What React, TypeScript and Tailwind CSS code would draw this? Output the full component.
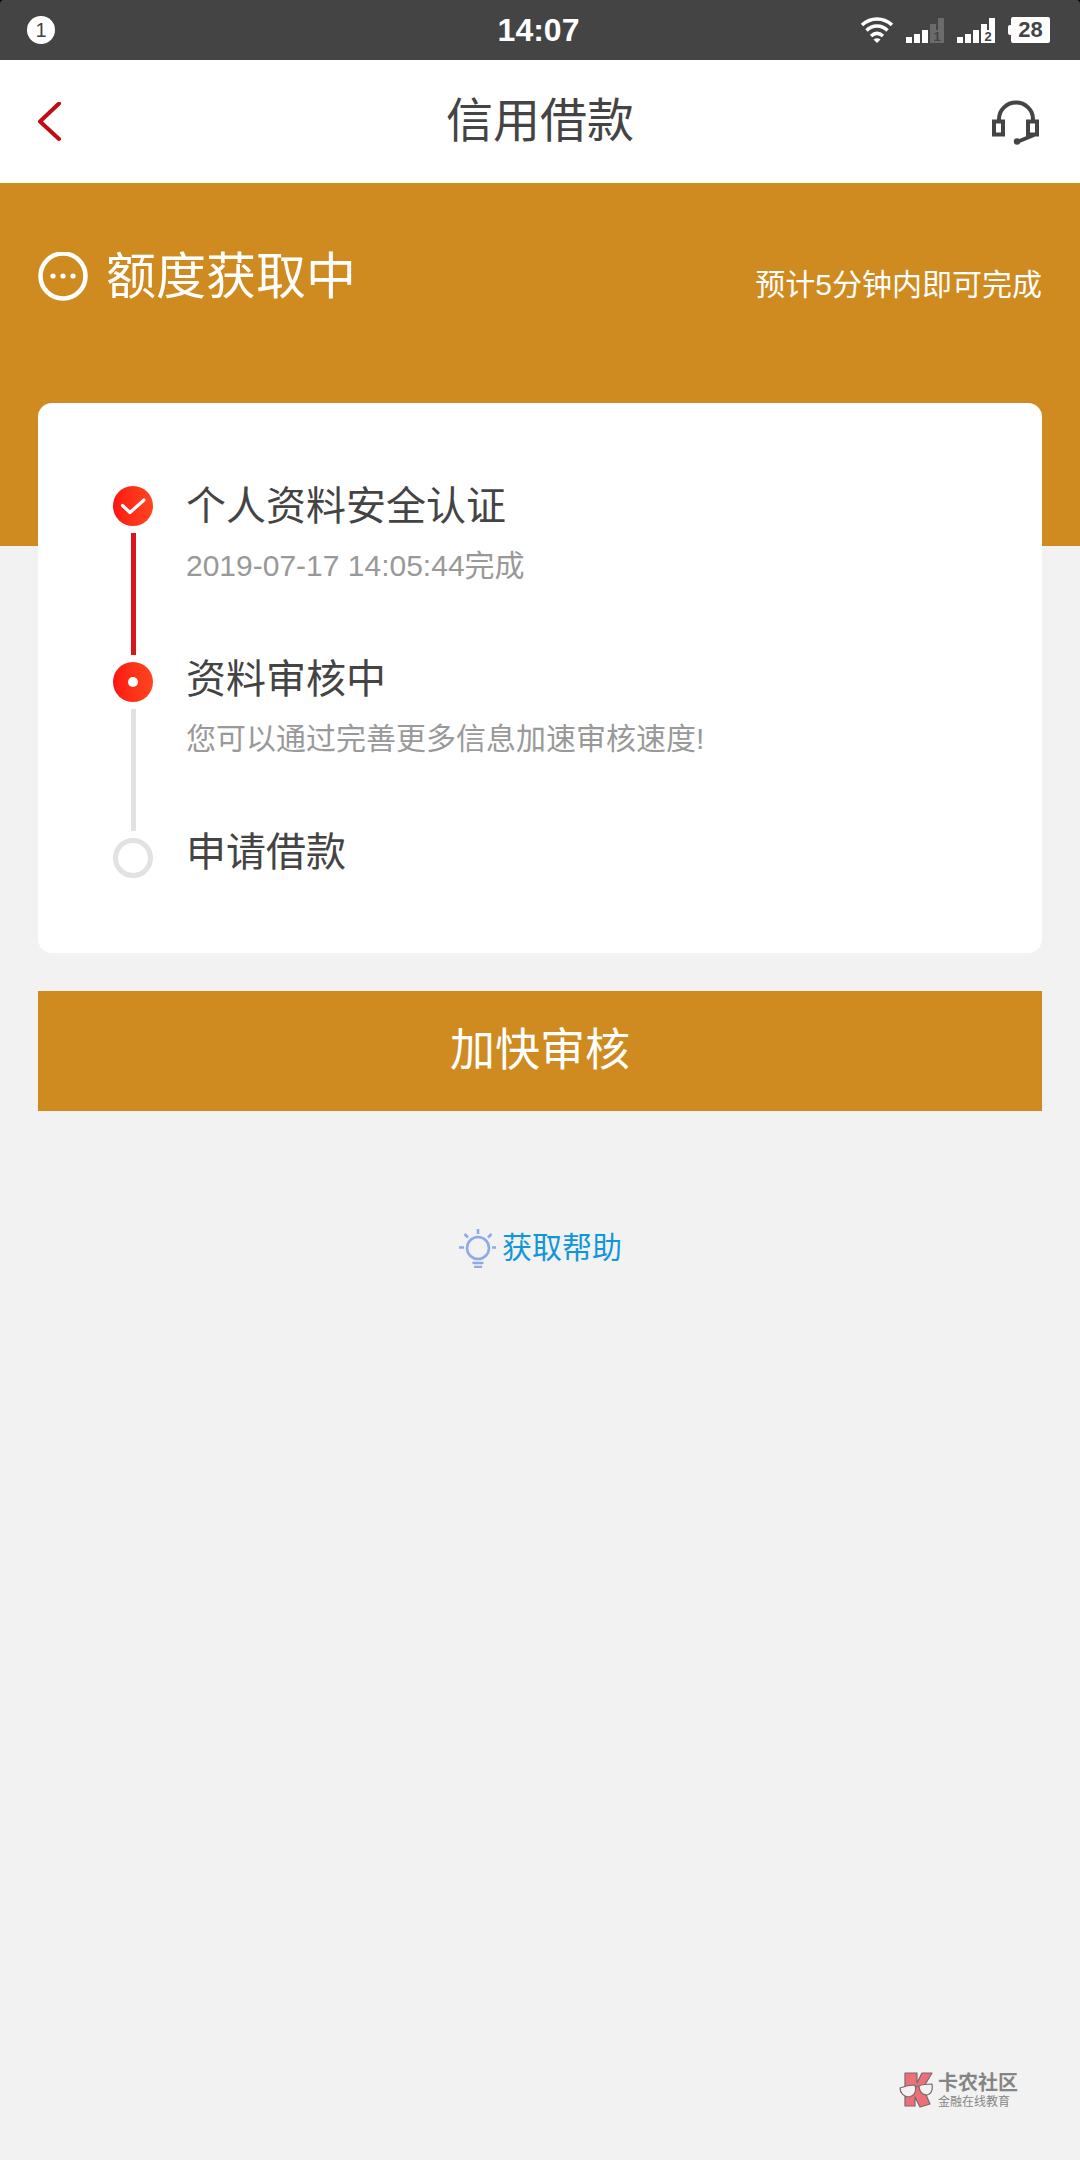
import { clsx } from "clsx";

type StepState = "done" | "current" | "todo";

const STEPS: { title: string; note?: string; state: StepState }[] = [
  { title: "个人资料安全认证", note: "2019-07-17 14:05:44完成", state: "done" },
  { title: "资料审核中", note: "您可以通过完善更多信息加速审核速度!", state: "current" },
  { title: "申请借款", state: "todo" },
];

export default function App() {
  return (
    <div className="flex min-h-screen flex-col bg-[#f2f2f2] font-['Liberation_Sans','Noto_Sans_CJK_SC',sans-serif] text-[#444444]">
      <StatusBar />
      <Header />
      <main>
        <Hero />
        <div className="-mt-[143px] px-[38px]">
          <StepCard />
          <button className="mt-[38px] block h-[120px] w-full bg-[#cf8b20] text-[45px] text-white">
            加快审核
          </button>
        </div>
        <div className="mt-[117px] flex justify-center">
          <a href="#help" className="flex items-center gap-[6px] text-[30px] leading-[40px] text-[#1296db]">
            <BulbIcon />
            获取帮助
          </a>
        </div>
      </main>
      <Footer />
    </div>
  );
}

function StatusBar() {
  return (
    <div className="bg-black">
      <div className="grid h-[60px] grid-cols-[1fr_auto_1fr] items-center rounded-t bg-[#444444] pr-[30px] pl-[27px] text-white">
        <span className="flex size-7 items-center justify-center rounded-full bg-white text-[20px] leading-none text-[#444444]">
          1
        </span>
        <span className="text-[32px] font-bold">14:07</span>
        <div className="flex items-center justify-end gap-[13px]">
          <WifiIcon />
          <SignalIcon sim="1" weak />
          <SignalIcon sim="2" />
          <div className="flex items-center">
            <span className="h-[10px] w-[3px] rounded-l-xs bg-white" />
            <span className="flex h-[26px] w-[39px] items-center justify-center rounded-xs bg-white text-[22px] leading-none font-bold text-[#444444]">
              28
            </span>
          </div>
        </div>
      </div>
    </div>
  );
}

function Header() {
  return (
    <header className="grid h-[123px] grid-cols-[1fr_auto_1fr] items-center bg-white px-[38px]">
      <button aria-label="返回" className="justify-self-start">
        <svg width="24" height="40" viewBox="0 0 24 40" fill="none" stroke="#c00d14" strokeWidth="4">
          <path d="M21 1.500 2 19.500 21 37" strokeLinecap="round" strokeLinejoin="round" />
        </svg>
      </button>
      <h1 className="text-[47px]">信用借款</h1>
      <button aria-label="客服" className="justify-self-end">
        <svg width="50" height="46" viewBox="0 0 50 46" fill="none" stroke="#444444" strokeWidth="4">
          <path d="M7 21v-1a17 16.500 0 0 1 34 0v1" />
          <path d="M2 22.500h9v13H2zM36 22.500h9v13h-9z" />
          <path d="M42 36 25 43" />
          <circle cx="25" cy="42.500" r="3.200" fill="#444444" stroke="none" />
        </svg>
      </button>
    </header>
  );
}

function Hero() {
  return (
    <section className="flex items-start justify-between bg-[#cf8b20] px-[38px] pt-16 pb-[239px] text-white">
      <h2 className="flex items-center gap-[18px] text-[50px] leading-[60px]">
        <svg width="50" height="50" viewBox="0 0 50 50" fill="white">
          <circle cx="25" cy="24" r="22.500" fill="none" stroke="white" strokeWidth="4.500" />
          <circle cx="15" cy="24" r="2.600" />
          <circle cx="25" cy="24" r="2.600" />
          <circle cx="35" cy="24" r="2.600" />
        </svg>
        额度获取中
      </h2>
      <p className="pt-[18px] text-[30px] leading-[40px]">预计5分钟内即可完成</p>
    </section>
  );
}

function StepCard() {
  return (
    <section className="flex gap-[33px] rounded-[14px] bg-white px-[75px] pt-[73px] pb-[71px]">
      <div className="flex flex-col items-center pt-[10px]">
        {STEPS.map((step, i) => (
          <div key={step.title} className="flex flex-col items-center">
            <StepIcon state={step.state} />
            {i < STEPS.length - 1 && (
              <span
                className={clsx(
                  "my-[7px] h-[122px] w-[5px]",
                  step.state === "done" ? "bg-[#d7151b]" : "bg-[#e2e2e2]"
                )}
              />
            )}
          </div>
        ))}
      </div>
      <ol className="flex flex-col gap-[53px]">
        {STEPS.map((step) => (
          <li key={step.title}>
            <h3 className="text-[40px] leading-[60px]">{step.title}</h3>
            {step.note && <p className="text-[30px] leading-[60px] text-[#999999]">{step.note}</p>}
          </li>
        ))}
      </ol>
    </section>
  );
}

function StepIcon({ state }: { state: StepState }) {
  if (state === "todo") {
    return <span className="size-10 rounded-full border-[5px] border-[#e2e2e2]" />;
  }
  return (
    <span className="flex size-10 items-center justify-center rounded-full bg-linear-to-r from-[#fb1212] to-[#ff4420]">
      {state === "done" ? (
        <svg width="28" height="20" viewBox="0 0 28 20" fill="none" stroke="white" strokeWidth="3.200">
          <path d="M3.500 9.500 11 16.500 25 4" strokeLinecap="round" strokeLinejoin="round" />
        </svg>
      ) : (
        <span className="size-[10px] rounded-full bg-white" />
      )}
    </span>
  );
}

function Footer() {
  return (
    <footer className="mt-auto flex justify-end gap-1 pr-[62px] pb-[50px] text-[#858585]">
      <svg width="35" height="36" viewBox="0 0 35 36" stroke="#77696b" strokeWidth="1.200" strokeLinejoin="round">
        <path d="M6 1h12v10l5-10h10L24 16l7 16-10 3-5-10v9H6z" fill="#ed7079" />
        <path d="M1 16c5-2 10-3 15-3 2 7-1 11-6 12-5 0-9-4-9-9zM20 14c4-2 8-2 13-2 1 6-1 10-5 11-5 0-8-4-8-9z" fill="#f2f2f2" />
        <path d="m16 15 4-1" fill="none" />
      </svg>
      <div>
        <p className="text-[20px] leading-[23px] font-bold">卡农社区</p>
        <p className="text-[12px] leading-[15px]">金融在线教育</p>
      </div>
    </footer>
  );
}

function WifiIcon() {
  return (
    <svg width="32" height="26" viewBox="0 0 32 26" fill="none" stroke="white" strokeWidth="3.500">
      <path d="M1 8c9-8 21-8 30 0M5.500 13.500c6-6 15-6 21 0M10 19c4-3.500 8-3.500 12 0" />
      <path d="M12.500 22.500q3.500-2.500 7 0L16 26z" fill="white" stroke="none" />
    </svg>
  );
}

function SignalIcon({ sim, weak }: { sim: string; weak?: boolean }) {
  return (
    <svg width="38" height="25" viewBox="0 0 38 25" fill="white">
      <path d="M0 19h6v6H0zM8 16h6v9H8zM16 12h6v13h-6z" />
      <path d="M24 6h6v6h2V0h6v25H24z" fill={weak ? "#6b6b6b" : "white"} />
      <text x="31" y="23" textAnchor="middle" fontSize="13" fontWeight="bold" fill="#444444">
        {sim}
      </text>
    </svg>
  );
}

function BulbIcon() {
  return (
    <svg width="38" height="40" viewBox="0 0 38 40" fill="none" stroke="#8eaae8" strokeWidth="2.600">
      <circle cx="20" cy="20" r="11" />
      <path d="M20 1v5M6.500 6l3.500 3.500M33.500 6 30 9.500M1 19.500h5M34 19.500h4M14.500 35h11M16 39h8" />
    </svg>
  );
}
